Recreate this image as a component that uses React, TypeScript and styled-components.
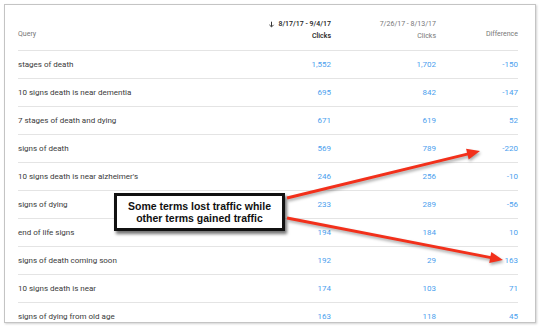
import { Fragment } from 'react';
import styled, { createGlobalStyle } from 'styled-components';

const GlobalStyle = createGlobalStyle`
  html, body {
    margin: 0;
    padding: 0;
    background: #fff;
    font-family: Roboto, "Liberation Sans", Arial, sans-serif;
  }
`;

const Page = styled.div`
  width: 540px;
  height: 329px;
  padding: 4px 4px 0 4px;
  box-sizing: border-box;
  position: relative;
  overflow: hidden;
`;

const Card = styled.div`
  position: relative;
  height: 319px;
  border: 1px solid #c4c4c4;
  box-shadow: 1px 1px 2px rgba(0, 0, 0, 0.18);
  background: #fff;
  overflow: hidden;
  box-sizing: border-box;
  padding: 0 17px 0 13px;
`;

const Grid = styled.div`
  display: grid;
  grid-template-columns: 1fr 105px 105px 82px;
`;

const HeadCell = styled.div<{ $align?: 'left' | 'right'; $pad?: number }>`
  height: 46px;
  box-sizing: border-box;
  display: flex;
  flex-direction: column;
  justify-content: flex-end;
  align-items: ${p => (p.$align === 'left' ? 'flex-start' : 'flex-end')};
  padding-bottom: ${p => p.$pad ?? 10}px;
  border-bottom: 1px solid #e4e4e4;
  font-size: 7px;
  color: #777;
`;

const HeadLine = styled.div<{ $strong?: boolean }>`
  display: flex;
  align-items: center;
  gap: 3px;
  line-height: 12px;
  color: ${p => (p.$strong ? '#222' : '#777')};
  font-weight: ${p => (p.$strong ? 500 : 400)};
`;

const Cell = styled.div<{ $num?: boolean }>`
  height: 28px;
  box-sizing: border-box;
  display: flex;
  align-items: center;
  justify-content: ${p => (p.$num ? 'flex-end' : 'flex-start')};
  border-bottom: 1px solid #e4e4e4;
  font-size: 8px;
  color: ${p => (p.$num ? '#4ba0ee' : '#3a3a3a')};
`;

const Callout = styled.div`
  position: absolute;
  left: 109px;
  top: 188px;
  width: 171px;
  height: 38px;
  box-sizing: border-box;
  border: 3px solid #111;
  background: #fff;
  box-shadow: 2px 3px 3px rgba(0, 0, 0, 0.55);
  display: flex;
  align-items: center;
  justify-content: center;
  text-align: center;
  font-family: "Liberation Sans", Arial, sans-serif;
  font-weight: 700;
  font-size: 10.5px;
  line-height: 12px;
  color: #111;
`;

const Arrows = styled.svg`
  position: absolute;
  left: 0;
  top: 0;
  width: 540px;
  height: 329px;
  pointer-events: none;
  filter: drop-shadow(1px 2px 1.5px rgba(0, 0, 0, 0.35));
`;

const rows: [string, string, string, string][] = [
  ['stages of death', '1,552', '1,702', '-150'],
  ['10 signs death is near dementia', '695', '842', '-147'],
  ['7 stages of death and dying', '671', '619', '52'],
  ['signs of death', '569', '789', '-220'],
  ["10 signs death is near alzheimer's", '246', '256', '-10'],
  ['signs of dying', '233', '289', '-56'],
  ['end of life signs', '194', '184', '10'],
  ['signs of death coming soon', '192', '29', '163'],
  ['10 signs death is near', '174', '103', '71'],
  ['signs of dying from old age', '163', '118', '45'],
];

function Arrow({ x1, y1, x2, y2 }: { x1: number; y1: number; x2: number; y2: number }) {
  const dx = x2 - x1;
  const dy = y2 - y1;
  const len = Math.hypot(dx, dy);
  const ux = dx / len;
  const uy = dy / len;
  const hl = 13;
  const hw = 5.5;
  const bx = x2 - ux * hl;
  const by = y2 - uy * hl;
  const pts = `${x2},${y2} ${bx - uy * hw},${by + ux * hw} ${bx + uy * hw},${by - ux * hw}`;
  return (
    <g>
      <line x1={x1} y1={y1} x2={bx + ux * 2} y2={by + uy * 2} stroke="#f2301b" strokeWidth={3} />
      <polygon points={pts} fill="#f2301b" />
    </g>
  );
}

export default function App() {
  return (
    <>
      <GlobalStyle />
      <Page>
        <Card>
          <Grid>
            <HeadCell $align="left">
              <HeadLine>Query</HeadLine>
            </HeadCell>
            <HeadCell $pad={8}>
              <HeadLine $strong>
                <svg width="7" height="7" viewBox="0 0 10 10">
                  <path d="M5 1v7M2 5.5L5 8.5 8 5.5" stroke="#333" strokeWidth="1.4" fill="none" />
                </svg>
                8/17/17 - 9/4/17
              </HeadLine>
              <HeadLine $strong>Clicks</HeadLine>
            </HeadCell>
            <HeadCell $pad={8}>
              <HeadLine>7/26/17 - 8/13/17</HeadLine>
              <HeadLine>Clicks</HeadLine>
            </HeadCell>
            <HeadCell>
              <HeadLine>Difference</HeadLine>
            </HeadCell>
            {rows.map(r => (
              <Fragment key={r[0]}>
                <Cell>{r[0]}</Cell>
                <Cell $num>{r[1]}</Cell>
                <Cell $num>{r[2]}</Cell>
                <Cell $num>{r[3]}</Cell>
              </Fragment>
            ))}
          </Grid>
          <Callout>
            Some terms lost traffic while
            <br />
            other terms gained traffic
          </Callout>
        </Card>
        <Arrows viewBox="0 0 540 329">
          <Arrow x1={287} y1={198} x2={480} y2={151} />
          <Arrow x1={287} y1={218} x2={503} y2={260} />
        </Arrows>
      </Page>
    </>
  );
}
